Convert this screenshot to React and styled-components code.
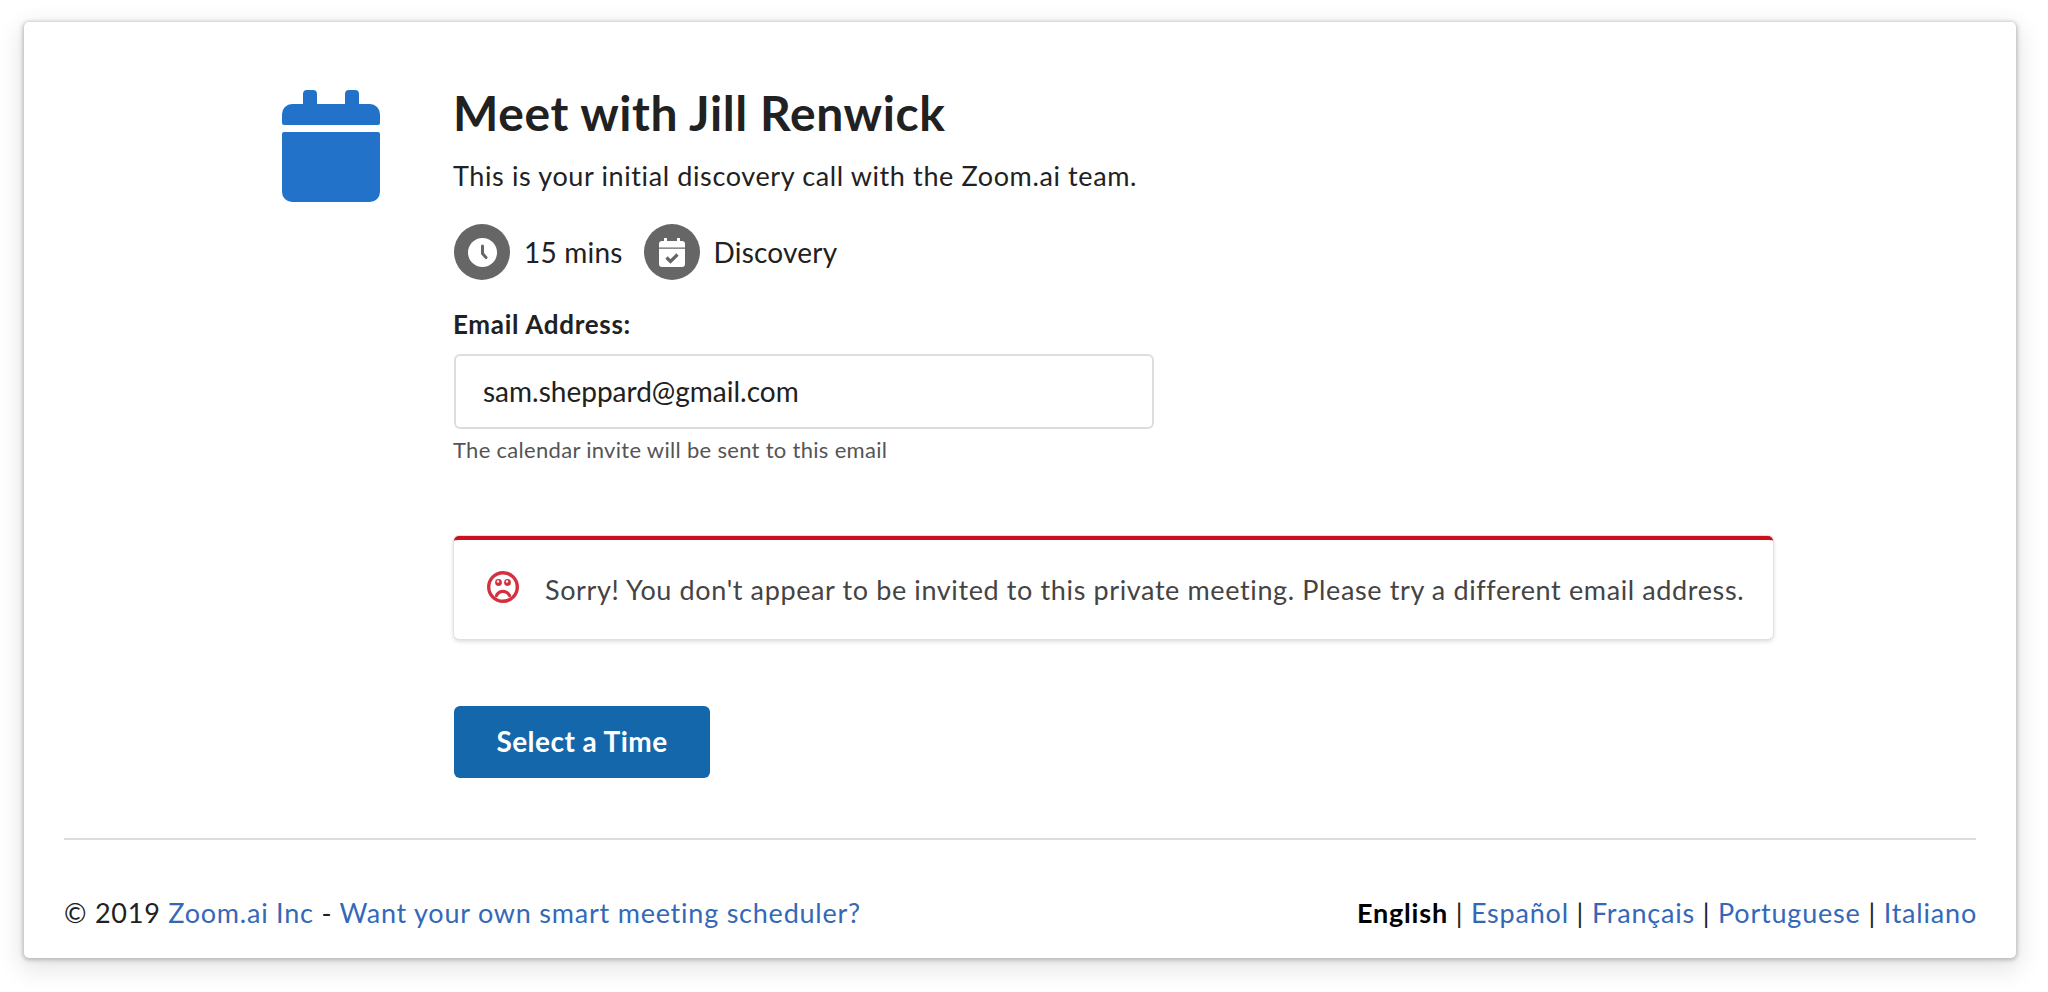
import React from 'react'
import styled, { createGlobalStyle } from 'styled-components'

const GlobalStyle = createGlobalStyle`
    html, body {
        margin: 0;
        background: #fff;
        font-family: "Lato", "Noto Sans", sans-serif;
        color: #212121;
    }
`

const Page = styled.div`
    box-sizing: border-box;
    height: 992px;
    padding: 22px 32px 34px 24px;
`

const Card = styled.main`
    box-sizing: border-box;
    height: 100%;
    display: flex;
    flex-direction: column;
    background: #fff;
    border-radius: 5px;
    box-shadow: 0 1px 4px 1px #b5b5b5, 0 8px 24px 4px rgba(0, 0, 0, 0.1);
    padding: 0 40px;
`

const Body = styled.div`
    flex: 1;
    display: grid;
    grid-template-columns: 98px 1fr;
    column-gap: 74px;
    padding: 68px 203px 0 218px;
`

const Content = styled.div`
    display: flex;
    flex-direction: column;
    align-items: flex-start;
`

const Title = styled.h1`
    margin: 0 0 0 -1px;
    font-size: 48px;
    line-height: 46px;
    font-weight: 700;
    letter-spacing: 0.6px;
`

const Subtitle = styled.p`
    margin: 22px 0 0 -1px;
    font-size: 27px;
    line-height: 36px;
    letter-spacing: 0.62px;
`

const Chips = styled.div`
    display: flex;
    align-items: center;
    margin-top: 30px;
`

const ChipIcon = styled.span`
    width: 56px;
    height: 56px;
    border-radius: 50%;
    background: #666;
    display: flex;
    align-items: center;
    justify-content: center;
`

const ChipLabel = styled.span`
    font-size: 28px;
    letter-spacing: 0.2px;
    margin: 0 21px 0 14px;
`

const Label = styled.label`
    margin: 30px 0 0 -1px;
    font-size: 26px;
    line-height: 28px;
    font-weight: 700;
    letter-spacing: 0.7px;
`

const EmailInput = styled.input`
    box-sizing: border-box;
    width: 700px;
    height: 75px;
    margin-top: 16px;
    padding: 0 27px 2px;
    border: 2px solid #ddd;
    border-radius: 6px;
    font: 28px "Lato", sans-serif;
    color: #212121;
    background: #fff;
    outline: none;
`

const Hint = styled.small`
    margin: 8px 0 0 -1px;
    font-size: 22px;
    line-height: 26px;
    color: #555;
    letter-spacing: 0.3px;
`

const Alert = styled.div`
    box-sizing: border-box;
    width: 100%;
    height: 103px;
    margin-top: 73px;
    display: flex;
    align-items: center;
    gap: 25px;
    padding: 0 20px 0 32px;
    background: #fff;
    border-top: 4px solid #cc0f1f;
    border-radius: 5px;
    box-shadow: 0 0 0 1px #e0e0e0, 0 2px 5px rgba(0, 0, 0, 0.18);
    font-size: 27px;
    letter-spacing: 0.62px;
    color: #444;
    white-space: nowrap;
`

const AlertIcon = styled.svg`
    flex: none;
    margin-bottom: 5px;
`

const Button = styled.button`
    width: 256px;
    height: 72px;
    margin-top: 67px;
    padding: 0 0 2px;
    border: 0;
    border-radius: 6px;
    background: #1467ab;
    color: #fff;
    font: 700 28px "Lato", sans-serif;
    letter-spacing: 0.45px;
`

const Footer = styled.footer`
    border-top: 2px solid #ddd;
    display: flex;
    justify-content: space-between;
    align-items: center;
    height: 120px;
    padding-top: 26px;
    box-sizing: border-box;
    font-size: 27px;
`

const FooterLeft = styled.span`
    letter-spacing: 0.77px;
`

const FooterRight = styled.span`
    letter-spacing: 0.8px;
    margin-right: -1px;
`

const FootLink = styled.a`
    color: #3468b7;
    text-decoration: none;
`

const CurrentLang = styled.strong`
    color: #000;
`

function CalendarIcon() {
    return (
        <svg width="98" height="112" viewBox="0 0 98 112">
            <path fill="#2272c9" d="M21 4a4 4 0 0 1 4-4h6a4 4 0 0 1 4 4v10h28V4a4 4 0 0 1 4-4h6a4 4 0 0 1 4 4v10h11a10 10 0 0 1 10 10v9a2 2 0 0 1-2 2H2a2 2 0 0 1-2-2v-9a10 10 0 0 1 10-10h11zM0 44a2 2 0 0 1 2-2h94a2 2 0 0 1 2 2v58a10 10 0 0 1-10 10H10a10 10 0 0 1-10-10z" />
        </svg>
    )
}

function ClockIcon() {
    return (
        <svg width="29" height="29" viewBox="0 0 29 29">
            <circle cx="14.5" cy="14.5" r="14.5" fill="#fff" />
            <path d="M14.5 8v7.5l3.5 4" fill="none" stroke="#666" strokeWidth="3" strokeLinecap="round" strokeLinejoin="round" />
        </svg>
    )
}

function CalendarCheckIcon() {
    return (
        <svg width="26" height="29" viewBox="0 0 26 29">
            <path fill="#fff" d="M5 0h3v3h10V0h3v3h2a3 3 0 0 1 3 3v3.5H0V6a3 3 0 0 1 3-3h2zM0 10.7h26V26a3 3 0 0 1-3 3H3a3 3 0 0 1-3-3z" />
            <path d="M7.5 19.5l4 4 7-7" fill="none" stroke="#666" strokeWidth="3.2" />
        </svg>
    )
}

function SadIcon() {
    return (
        <AlertIcon width="34" height="34" viewBox="0 0 34 34">
            <circle cx="17" cy="17" r="14.3" fill="none" stroke="#d5303f" strokeWidth="3.4" />
            <circle cx="12.5" cy="12.5" r="3.4" fill="#d5303f" />
            <circle cx="21.5" cy="12.5" r="3.4" fill="#d5303f" />
            <circle cx="12" cy="11.5" r="1.2" fill="#fff" />
            <circle cx="21" cy="11.5" r="1.2" fill="#fff" />
            <path d="M10.5 25.5c3-5.5 10-5.5 13 0" fill="none" stroke="#d5303f" strokeWidth="3.2" strokeLinecap="round" />
        </AlertIcon>
    )
}

export default function App() {
    return (
        <>
            <GlobalStyle />
            <Page>
                <Card>
                    <Body>
                        <CalendarIcon />
                        <Content>
                            <Title>Meet with Jill Renwick</Title>
                            <Subtitle>This is your initial discovery call with the Zoom.ai team.</Subtitle>
                            <Chips>
                                <ChipIcon><ClockIcon /></ChipIcon>
                                <ChipLabel>15 mins</ChipLabel>
                                <ChipIcon><CalendarCheckIcon /></ChipIcon>
                                <ChipLabel>Discovery</ChipLabel>
                            </Chips>
                            <Label htmlFor="email">Email Address:</Label>
                            <EmailInput id="email" defaultValue="sam.sheppard@gmail.com" />
                            <Hint>The calendar invite will be sent to this email</Hint>
                            <Alert>
                                <SadIcon />
                                <span>Sorry! You don't appear to be invited to this private meeting. Please try a different email address.</span>
                            </Alert>
                            <Button>Select a Time</Button>
                        </Content>
                    </Body>
                    <Footer>
                        <FooterLeft>© 2019 <FootLink href="#">Zoom.ai Inc</FootLink> - <FootLink href="#">Want your own smart meeting scheduler?</FootLink></FooterLeft>
                        <FooterRight>
                            <CurrentLang>English</CurrentLang> | <FootLink href="#">Español</FootLink> | <FootLink href="#">Français</FootLink> | <FootLink href="#">Portuguese</FootLink> | <FootLink href="#">Italiano</FootLink>
                        </FooterRight>
                    </Footer>
                </Card>
            </Page>
        </>
    )
}
